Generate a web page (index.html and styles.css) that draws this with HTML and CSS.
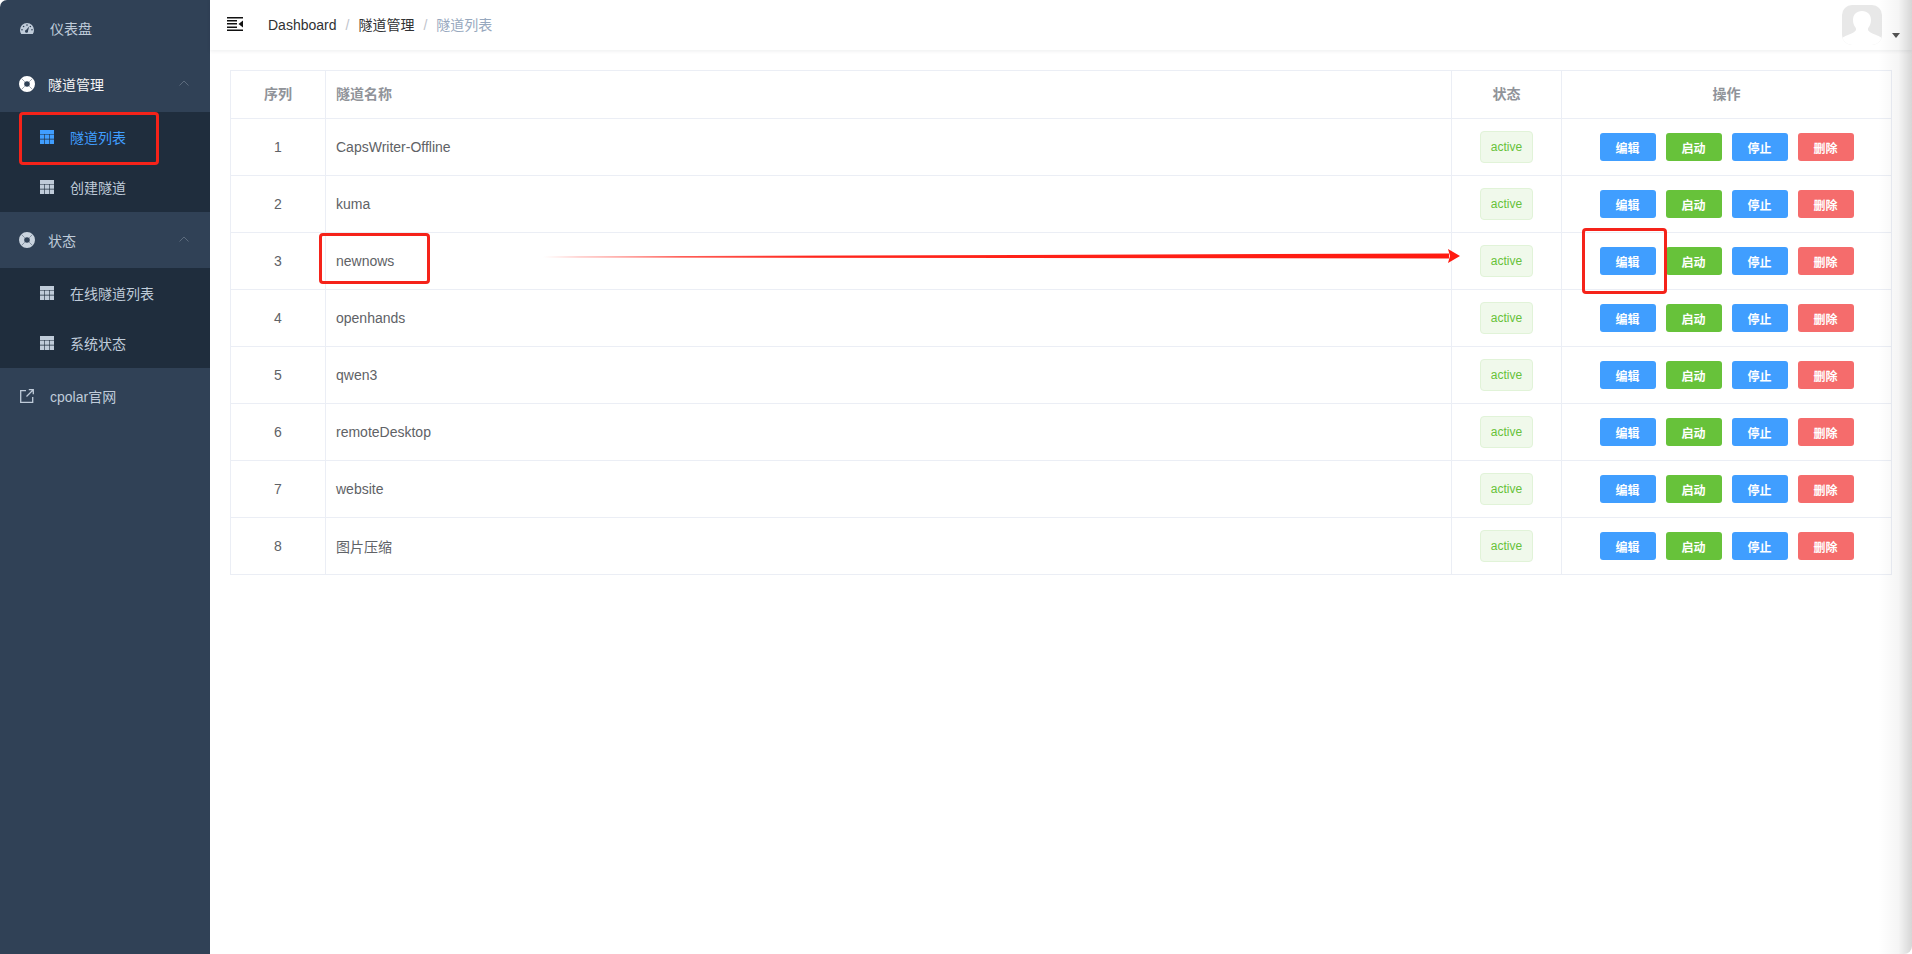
FILE: index.html
```html
<!DOCTYPE html>
<html lang="en">
  <head>
    <meta charset="utf-8">
    <title>cpolar</title>
    <link rel="stylesheet" href="styles.css">
  </head>
  <body>
    <svg width="0" height="0" class="defs">
      <symbol id="i-table" viewBox="0 0 14 14">
        <path fill="currentColor" d="M0 0h14v4H0zM0 4.600h4.300v4.200H0zM4.900 4.600h4.200v4.200H4.900zM9.700 4.600H14v4.200H9.700zM0 9.400h4.300V14H0zM4.900 9.400h4.200V14H4.900zM9.700 9.400H14V14H9.700z"/>
      </symbol>
      <symbol id="i-ring" viewBox="0 0 16 16">
        <path fill="currentColor" fill-rule="evenodd" d="M8 0a8 8 0 1 1 0 16A8 8 0 0 1 8 0zm0 5.200a2.800 2.800 0 1 0 0 5.600 2.800 2.800 0 0 0 0-5.600z"/>
        <path stroke="#304156" stroke-width="1" d="M5.800 5.800 2.500 2.500M10.200 5.800 13.500 2.500M5.800 10.200 2.500 13.500M10.200 10.200 13.500 13.500" opacity=".45"/>
      </symbol>
      <symbol id="i-chevron" viewBox="0 0 10 6">
        <path fill="none" stroke="currentColor" stroke-width="1" d="M.5 5.500 5 1l4.500 4.500"/>
      </symbol>
    </svg>

    <div class="app">
      <!-- sidebar -->
      <aside class="sidebar">
        <a class="menu-item">
          <svg class="icon" viewBox="0 0 14 12"><path fill="currentColor" fill-rule="evenodd" d="M7 1a7 7 0 0 1 7 7c0 1.500-.4 2.900-1.200 4H1.200A7 7 0 0 1 0 8a7 7 0 0 1 7-7zM7 2.300a.8.8 0 1 0 0 1.600.8.8 0 0 0 0-1.600zM3.600 3.700a.8.8 0 1 0 0 1.600.8.8 0 0 0 0-1.600zM10.400 3.700a.8.8 0 1 0 0 1.600.8.8 0 0 0 0-1.600zM2 7a.8.8 0 1 0 0 1.600A.8.8 0 0 0 2 7zM12 7a.8.8 0 1 0 0 1.600A.8.8 0 0 0 12 7zM9.200 4.500 6.300 7.800a1.500 1.500 0 1 0 1.700 1.300z"/></svg>
          <span>仪表盘</span>
        </a>

        <div class="menu-item menu-open">
          <svg class="icon ring"><use href="#i-ring"/></svg>
          <span class="menu-title">隧道管理</span>
          <svg class="chevron"><use href="#i-chevron"/></svg>
        </div>
        <div class="submenu">
          <a class="sub-item active"><svg class="icon"><use href="#i-table"/></svg><span>隧道列表</span></a>
          <a class="sub-item"><svg class="icon"><use href="#i-table"/></svg><span>创建隧道</span></a>
        </div>

        <div class="menu-item">
          <svg class="icon ring dim"><use href="#i-ring"/></svg>
          <span class="menu-title">状态</span>
          <svg class="chevron"><use href="#i-chevron"/></svg>
        </div>
        <div class="submenu">
          <a class="sub-item"><svg class="icon"><use href="#i-table"/></svg><span>在线隧道列表</span></a>
          <a class="sub-item"><svg class="icon"><use href="#i-table"/></svg><span>系统状态</span></a>
        </div>

        <a class="menu-item">
          <svg class="icon" viewBox="0 0 14 14"><path fill="none" stroke="currentColor" stroke-width="1.300" d="M6 1.700H.7v11.600h12V8M6.500 7.500 13 1M8.800.7h4.500v4.500"/></svg>
          <span>cpolar官网</span>
        </a>
      </aside>

      <div class="main">
        <!-- top bar -->
        <header class="navbar">
          <svg class="hamburger" viewBox="0 0 16 14"><path fill="#111" d="M0 0h16v1.500H0zM0 6h10v1.500H0zM0 12.500h16V14H0zM0 3h10v1.500H0zM0 9.500h10V11H0zM16 3.500v7L11.500 7z"/></svg>
          <nav class="breadcrumb">
            <span>Dashboard</span><i>/</i><span>隧道管理</span><i>/</i><span class="current">隧道列表</span>
          </nav>
          <div class="user">
            <div class="avatar">
              <svg viewBox="0 0 40 40"><path fill="#fff" d="M20 6c5.500 0 9 3.500 9 9 0 3-1 5.500-2.500 7.500-.8 1.200-.8 2.700.5 3.800 1.500 1.400 3 2.200 6 3.200 2 .8 5 2 7 3.500V40H0v-7c2-1.500 5-2.700 7-3.500 3-1 4.500-1.800 6-3.200 1.300-1.100 1.300-2.600.5-3.800C12 20.500 11 18 11 15c0-5.500 3.500-9 9-9z"/></svg>
            </div>
            <i class="caret"></i>
          </div>
        </header>

        <section class="content">
          <table class="tunnels">
            <colgroup>
              <col class="col-num"><col><col class="col-state"><col class="col-ops">
            </colgroup>
            <thead>
              <tr><th>序列</th><th class="left">隧道名称</th><th>状态</th><th>操作</th></tr>
            </thead>
            <tbody>
              <tr><td class="center">1</td><td>CapsWriter-Offline</td><td class="center"><span class="tag">active</span></td><td class="center"><div class="ops"><button class="btn blue">编辑</button><button class="btn green">启动</button><button class="btn blue">停止</button><button class="btn red">删除</button></div></td></tr>
              <tr><td class="center">2</td><td>kuma</td><td class="center"><span class="tag">active</span></td><td class="center"><div class="ops"><button class="btn blue">编辑</button><button class="btn green">启动</button><button class="btn blue">停止</button><button class="btn red">删除</button></div></td></tr>
              <tr><td class="center">3</td><td>newnows</td><td class="center"><span class="tag">active</span></td><td class="center"><div class="ops"><button class="btn blue">编辑</button><button class="btn green">启动</button><button class="btn blue">停止</button><button class="btn red">删除</button></div></td></tr>
              <tr><td class="center">4</td><td>openhands</td><td class="center"><span class="tag">active</span></td><td class="center"><div class="ops"><button class="btn blue">编辑</button><button class="btn green">启动</button><button class="btn blue">停止</button><button class="btn red">删除</button></div></td></tr>
              <tr><td class="center">5</td><td>qwen3</td><td class="center"><span class="tag">active</span></td><td class="center"><div class="ops"><button class="btn blue">编辑</button><button class="btn green">启动</button><button class="btn blue">停止</button><button class="btn red">删除</button></div></td></tr>
              <tr><td class="center">6</td><td>remoteDesktop</td><td class="center"><span class="tag">active</span></td><td class="center"><div class="ops"><button class="btn blue">编辑</button><button class="btn green">启动</button><button class="btn blue">停止</button><button class="btn red">删除</button></div></td></tr>
              <tr><td class="center">7</td><td>website</td><td class="center"><span class="tag">active</span></td><td class="center"><div class="ops"><button class="btn blue">编辑</button><button class="btn green">启动</button><button class="btn blue">停止</button><button class="btn red">删除</button></div></td></tr>
              <tr><td class="center">8</td><td>图片压缩</td><td class="center"><span class="tag">active</span></td><td class="center"><div class="ops"><button class="btn blue">编辑</button><button class="btn green">启动</button><button class="btn blue">停止</button><button class="btn red">删除</button></div></td></tr>
            </tbody>
          </table>
        </section>
      </div>
    </div>

    <!-- red annotations drawn over the screenshot -->
    <div class="mark mark-menu"></div>
    <div class="mark mark-name"></div>
    <div class="mark mark-btn"></div>
    <svg class="arrow" viewBox="0 0 920 16">
      <defs>
        <linearGradient id="fade" x1="0" x2="1" y1="0" y2="0">
          <stop offset="0" stop-color="#ff1a10" stop-opacity="0"/>
          <stop offset=".04" stop-color="#ff1a10" stop-opacity=".3"/>
          <stop offset=".15" stop-color="#ff1a10" stop-opacity=".7"/>
          <stop offset=".3" stop-color="#ff1a10" stop-opacity=".95"/>
          <stop offset="1" stop-color="#ff1a10"/>
        </linearGradient>
      </defs>
      <path fill="url(#fade)" d="M0 8.500V9.500L906 10.500v-5z"/>
      <path fill="#ff1a10" d="M905 1 917 8 905 15 907 8z"/>
    </svg>
    <div class="edge"></div>
  </body>
</html>
```

FILE: styles.css
```css
* {
  box-sizing: border-box;
}

html,
body {
  margin: 0;
  height: 100%;
  background: #fff;
  overflow: hidden;
  font-family: "Liberation Sans", "Noto Sans CJK SC", sans-serif;
  font-size: 14px;
}

.defs {
  position: absolute;
}

.app {
  display: flex;
  height: 954px;
}

/* sidebar */
.sidebar {
  flex: 0 0 210px;
  background-color: #304156;
  border-top-left-radius: 7px;
  color: #bfcbd9;
}

.menu-item {
  display: flex;
  align-items: center;
  height: 56px;
  padding-left: 20px;
}

.menu-item > span {
  margin-left: 16px;
}

.menu-open,
.menu-open .menu-title {
  color: #f4f4f5;
}

.menu-item > .menu-title {
  margin-left: 14px;
  flex: 1;
}

.icon {
  width: 14px;
  height: 14px;
  flex: none;
}

.ring {
  width: 16px;
  height: 16px;
  margin-left: -1px;
  margin-right: -1px;
  color: #fff;
}

.ring.dim {
  color: #c9d3de;
}

.chevron {
  width: 10px;
  height: 6px;
  margin-right: 21px;
  margin-top: -2px;
  color: #5c6b7d;
}

.submenu {
  background-color: #1f2d3d;
}

.sub-item {
  display: flex;
  align-items: center;
  height: 50px;
  padding-left: 40px;
}

.sub-item .icon {
  margin-top: -1px;
}

.sub-item span {
  margin-left: 16px;
}

.sub-item.active {
  color: #409eff;
}

/* top bar */
.main {
  flex: 1;
  min-width: 0;
}

.navbar {
  display: flex;
  align-items: center;
  height: 50px;
  padding-left: 17px;
  box-shadow: 0 1px 4px rgba(0, 21, 41, 0.08);
}

.hamburger {
  width: 16px;
  height: 14px;
  margin-top: -3px;
}

.breadcrumb {
  flex: 1;
  margin-left: 25px;
  margin-top: -2px;
  color: #303133;
}

.breadcrumb i {
  margin: 0 9px;
  font-style: normal;
  color: #c0c4cc;
}

.breadcrumb .current {
  color: #97a8be;
}

.user {
  display: flex;
  align-items: flex-end;
  margin-right: 12px;
}

.avatar {
  width: 40px;
  height: 40px;
  border-radius: 10px;
  overflow: hidden;
  background-color: #e8e8e8;
}

.avatar svg {
  display: block;
  width: 40px;
  height: 40px;
}

.caret {
  width: 0;
  height: 0;
  margin-left: 10px;
  margin-bottom: 7px;
  border-top: 5px solid #555;
  border-left: 4px solid transparent;
  border-right: 4px solid transparent;
}

/* table */
.content {
  padding: 20px;
}

.tunnels {
  width: 100%;
  border-collapse: collapse;
  table-layout: fixed;
  color: #606266;
}

.tunnels th,
.tunnels td {
  border: 1px solid #ebeef5;
  padding: 0 10px;
}

.tunnels th {
  height: 48px;
  padding-bottom: 3px;
  font-weight: 700;
  color: #909399;
}

.tunnels td {
  height: 57px;
}

.tunnels th.left {
  text-align: left;
}

.center {
  text-align: center;
}

.col-num {
  width: 95px;
}

.col-state {
  width: 110px;
}

.col-ops {
  width: 330px;
}

.tag {
  display: inline-block;
  height: 32px;
  width: 53px;
  line-height: 30px;
  font-size: 12px;
  color: #67c23a;
  background-color: #f0f9eb;
  border: 1px solid #e1f3d8;
  border-radius: 4px;
  vertical-align: middle;
}

.ops {
  display: flex;
  justify-content: center;
  gap: 10px;
}

.btn {
  width: 56px;
  height: 28px;
  padding: 0;
  border: 0;
  border-radius: 3px;
  font-family: inherit;
  font-size: 12px;
  font-weight: 700;
  color: #fff;
}

.blue {
  background-color: #409eff;
}

.green {
  background-color: #67c23a;
}

.red {
  background-color: #f56c6c;
}

/* annotations */
.mark {
  position: absolute;
  border: 3px solid #f5231a;
  border-radius: 4px;
}

.mark-menu {
  left: 19px;
  top: 112px;
  width: 140px;
  height: 53px;
}

.mark-name {
  left: 319px;
  top: 233px;
  width: 111px;
  height: 51px;
}

.mark-btn {
  left: 1582px;
  top: 228px;
  width: 85px;
  height: 66px;
}

.arrow {
  position: absolute;
  left: 543px;
  top: 248px;
  width: 920px;
  height: 16px;
}

/* window edge fading at the right */
.edge {
  position: absolute;
  top: 0;
  right: 0;
  bottom: 0;
  width: 34px;
  background: linear-gradient(to right, rgba(0, 0, 0, 0), rgba(0, 0, 0, 0.04) 60%, rgba(0, 0, 0, 0.16));
  border-radius: 0 0 8px 0;
  pointer-events: none;
}
```
